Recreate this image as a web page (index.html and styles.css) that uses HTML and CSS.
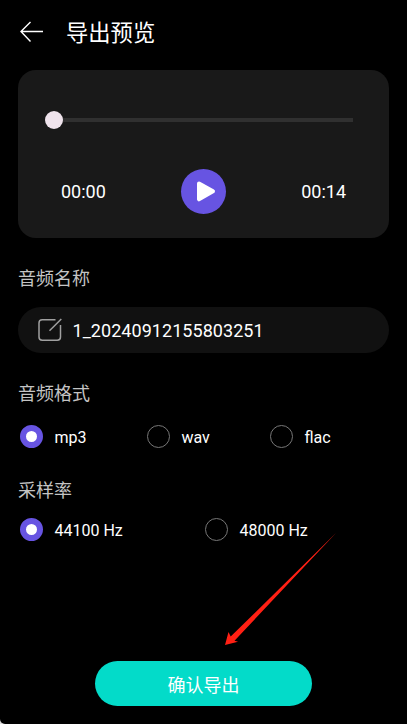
FILE: index.html
```
<!DOCTYPE html>
<html lang="zh-CN">
<head>
    <meta charset="UTF-8">
    <meta name="viewport" content="width=device-width, initial-scale=1.0">
    <title>导出预览</title>
    <link rel="stylesheet" href="styles.css">
</head>
<body>
    <div class="screen">
        <header>
            <svg class="back" width="24" height="22" viewBox="0 0 24 22">
                <path d="M24 10.5H2M11.5 1L2 10.5L11.5 20.5" fill="none" stroke="#fff" stroke-width="1.4"/>
            </svg>
            <h1>导出预览</h1>
        </header>

        <div class="player">
            <div class="track"><div class="thumb"></div></div>
            <div class="controls">
                <span>00:00</span>
                <button class="play-btn">
                    <svg width="45" height="45" viewBox="0 0 45 45">
                        <path d="M18 14.5L32 22.3L18 30.3Z" fill="#fff" stroke="#fff" stroke-width="4" stroke-linejoin="round"/>
                    </svg>
                </button>
                <span>00:14</span>
            </div>
        </div>

        <h2>音频名称</h2>
        <div class="name-field">
            <svg width="26" height="26" viewBox="0 0 26 26" fill="none" stroke="#a0a0a0" stroke-width="1.5">
                <path d="M18.5 2.7H5.2Q2 2.7 2 5.9V20.1Q2 23.3 5.2 23.3H20.3Q23.5 23.3 23.5 20.1V8"/>
                <path d="M12.5 13.8L24.3 2"/>
            </svg>
            <span>1_20240912155803251</span>
        </div>

        <h2>音频格式</h2>
        <div class="options formats">
            <div class="option"><i class="radio checked"></i><span>mp3</span></div>
            <div class="option"><i class="radio"></i><span>wav</span></div>
            <div class="option"><i class="radio"></i><span>flac</span></div>
        </div>

        <h2 class="rate-title">采样率</h2>
        <div class="options rates">
            <div class="option"><i class="radio checked"></i><span>44100 Hz</span></div>
            <div class="option"><i class="radio"></i><span>48000 Hz</span></div>
        </div>

        <button class="export-btn">确认导出</button>

        <svg class="pointer" width="112" height="114" viewBox="0 0 112 114">
            <path d="M0 113L3.5 100L5.7 104.6L111 1L9.5 108.7L13 109.7Z" fill="#ff2014"/>
        </svg>
    </div>
</body>
</html>
```
FILE: styles.css
```
* {
    box-sizing: border-box;
}
body {
    margin: 0;
    background-color: #ddd;
    font-family: Roboto, "Noto Sans CJK SC", sans-serif;
    color: #fff;
}
.screen {
    position: relative;
    display: flex;
    flex-direction: column;
    height: 724px;
    padding: 0 18px;
    background-color: #000;
    border-bottom-left-radius: 5px;
    overflow: hidden;
}
header {
    display: flex;
    align-items: center;
    height: 64px;
    margin-bottom: 6px;
}
.back {
    margin: 0 23px 0 1px;
}
h1 {
    margin: 0;
    padding-top: 2px;
    font-size: 22.3px;
    font-weight: 400;
    line-height: 32px;
}
.player {
    height: 167.5px;
    padding: 48px 36px 0;
    border-radius: 18px;
    background-color: #191919;
}
.track {
    display: flex;
    align-items: center;
    height: 4px;
    background-color: #303030;
}
.thumb {
    flex-shrink: 0;
    width: 18px;
    height: 18px;
    margin-left: -9px;
    border-radius: 50%;
    background-color: #efe3ec;
}
.controls {
    display: flex;
    justify-content: space-between;
    align-items: center;
    margin-top: 46.5px;
    padding: 0 7px;
    font-size: 18px;
}
.play-btn {
    width: 45px;
    height: 45px;
    padding: 0;
    border: none;
    border-radius: 50%;
    background-color: #6754e2;
}
.play-btn svg {
    display: block;
}
h2 {
    margin: 27px 0 0;
    font-size: 18px;
    font-weight: 400;
    line-height: 28px;
    color: #c4c4c4;
}
.name-field {
    display: flex;
    align-items: center;
    gap: 9.5px;
    height: 45.5px;
    margin-top: 14.5px;
    padding-left: 19px;
    padding-right: 19px;
    border-radius: 23px;
    background-color: #111;
    font-size: 18px;
    letter-spacing: 0.05px;
}
.name-field span {
    padding-top: 1px;
}
.options {
    display: grid;
    height: 23px;
    padding-left: 2px;
    font-size: 16px;
}
.formats {
    grid-template-columns: 127px 123px 1fr;
    margin-top: 17px;
}
.rates {
    grid-template-columns: 185px 1fr;
    margin-top: 13px;
}
.rate-title {
    margin-top: 29px;
}
.option {
    display: flex;
    align-items: center;
    gap: 11.5px;
}
.option span {
    padding-top: 2px;
}
.radio {
    width: 23px;
    height: 23px;
    border: 1px solid #777;
    border-radius: 50%;
}
.radio.checked {
    border: 6px solid #6754e2;
    background-color: #fff;
}
.export-btn {
    width: 217px;
    height: 45px;
    margin: auto auto 18px;
    padding: 0;
    border: none;
    border-radius: 23px;
    background-color: #03dbc9;
    color: #fff;
    font-family: inherit;
    font-size: 18px;
}
.pointer {
    position: absolute;
    left: 225px;
    top: 532px;
}
```
